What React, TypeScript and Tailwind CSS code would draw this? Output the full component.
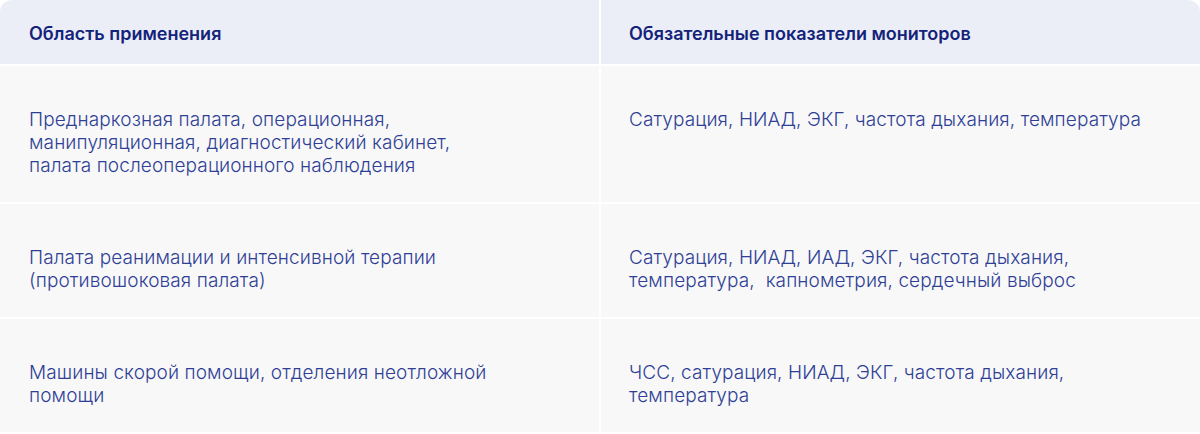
const rows: [string, string][] = [
  [
    "Преднаркозная палата, операционная, манипуляционная, диагностический кабинет, палата послеоперационного наблюдения",
    "Сатурация, НИАД, ЭКГ, частота дыхания, температура",
  ],
  [
    "Палата реанимации и интенсивной терапии (противошоковая палата)",
    "Сатурация, НИАД, ИАД, ЭКГ, частота дыхания, температура,  капнометрия, сердечный выброс",
  ],
  [
    "Машины скорой помощи, отделения неотложной помощи",
    "ЧСС, сатурация, НИАД, ЭКГ, частота дыхания, температура",
  ],
];

export default function App() {
  return (
    <div className="w-[1200px] h-[434px] overflow-hidden bg-white font-['Inter',sans-serif]">
      <div className="grid grid-cols-[599px_1fr] gap-[2px] bg-white rounded-t-[12px] overflow-hidden">
        <div className="h-[64px] flex items-center pt-[2px] px-[29px] bg-[#eceef7] text-[18px] font-semibold text-[#13237a]">
          Область применения
        </div>
        <div className="h-[64px] flex items-center pt-[2px] px-[28px] bg-[#eceef7] text-[18px] font-semibold text-[#13237a]">
          Обязательные показатели мониторов
        </div>
        {rows.map(([area, params], i) => (
          <div key={i} className="contents">
            <div className="bg-[#f8f8f9] pl-[29px] pr-[105px] pt-[42px] pb-[25px] text-[19px] leading-[23px] tracking-[0.1px] font-light text-[#2f3f95] whitespace-pre-wrap">
              {area}
            </div>
            <div className="bg-[#f8f8f9] pl-[28px] pr-[40px] pt-[42px] pb-[25px] text-[19px] leading-[23px] tracking-[0.1px] font-light text-[#2f3f95] whitespace-pre-wrap">
              {params}
            </div>
          </div>
        ))}
      </div>
    </div>
  );
}
